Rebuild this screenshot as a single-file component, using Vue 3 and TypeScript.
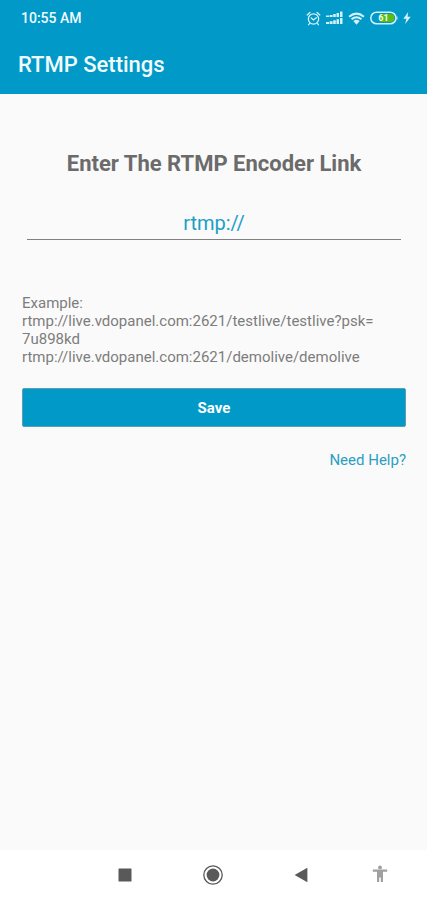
<script setup lang="ts">
import { ref } from 'vue'

const link = ref('rtmp://')
const saved = ref('')

function save(): void {
  saved.value = link.value.trim()
}
</script>

<template>
  <div class="screen">
    <header class="top">
      <div class="status">
        <span class="clock">10:55 AM</span>
        <div class="indicators">
          <svg class="alarm" viewBox="0 0 16 16" aria-label="Alarm">
            <g fill="none" stroke="currentColor" stroke-width="1.4" stroke-linecap="round">
              <circle cx="8" cy="8.5" r="5.5" />
              <path d="M1.2 4.2 4.2 1.6M14.8 4.2 11.8 1.6M3.8 13.4 2.8 14.6M12.2 13.4l1 1.2M5.6 7.4 8 9.6l3-2.4" />
            </g>
          </svg>
          <svg class="signal" viewBox="0 0 17 14" aria-label="Signal">
            <g fill="currentColor">
              <path d="M0 4.5h3V6H0zM3.6 4h3v2h-3zM7.2 3h2.6v3H7.2zM10.5 2H13v4h-2.5zM14 0.5h2.5V6H14z" />
              <path d="M0 11h3v2H0zM3.6 10.2h3V13h-3zM7.2 9.2h2.6V13H7.2zM10.5 8.2H13V13h-2.5zM14 7h2.5v6H14z" />
            </g>
          </svg>
          <svg class="wifi" viewBox="0 0 18 14" aria-label="Wi-Fi">
            <g fill="none" stroke="currentColor" stroke-width="2.2">
              <path d="M1 5.2Q9-1.6 17 5.2" />
              <path d="M3.7 7.9Q9 3.3 14.3 7.9" />
            </g>
            <path fill="currentColor" d="M5.6 9.7Q9 6.9 12.4 9.7L9 13.7z" />
          </svg>
          <svg class="battery" viewBox="0 0 28 14" aria-label="Battery charging">
            <rect x="0.8" y="1.2" width="25.2" height="11.6" rx="5.8" fill="none" stroke="currentColor" stroke-width="1.5" />
            <path fill="currentColor" d="M26.6 4.6q2 2.4 0 4.8z" />
            <path fill="#58bd16" d="M10 3h10.4a4 4 0 0 1 0 8H10z" />
            <text x="13.4" y="10.4" text-anchor="middle" class="level">61</text>
          </svg>
          <svg class="bolt" viewBox="0 0 8 12" aria-hidden="true">
            <path fill="currentColor" d="M5.2 0 .3 6.8h3L2.2 12 7.7 4.8H4.6z" />
          </svg>
        </div>
      </div>
      <h1 class="title">RTMP Settings</h1>
    </header>

    <main class="content">
      <form class="form" @submit.prevent="save">
        <label class="heading" for="link">Enter The RTMP Encoder Link</label>
        <input id="link" v-model="link" class="field" type="text" autocomplete="off" spellcheck="false" />
        <p class="example">
          Example:<br />rtmp://live.vdopanel.com:2621/testlive/testlive?psk=<wbr />7u898kd<br />rtmp://live.vdopanel.com:2621/demolive/demolive
        </p>
        <button class="save" type="submit">Save</button>
        <a class="help" href="#help">Need Help?</a>
      </form>
    </main>

    <nav class="navbar" aria-label="System">
      <button class="key recents" type="button" aria-label="Recent apps">
        <svg viewBox="0 0 20 20"><rect x="3.5" y="3.5" width="13" height="13" rx="0.5" fill="#595959" /></svg>
      </button>
      <button class="key" type="button" aria-label="Home">
        <svg viewBox="0 0 20 20">
          <circle cx="10" cy="10" r="9.2" fill="none" stroke="#595959" stroke-width="1.3" />
          <circle cx="10" cy="10" r="6.4" fill="#595959" />
        </svg>
      </button>
      <button class="key" type="button" aria-label="Back">
        <svg viewBox="0 0 20 20"><path d="M3.6 10 16.4 2.8v14.4z" fill="#595959" /></svg>
      </button>
      <button class="key" type="button" aria-label="Accessibility">
        <svg viewBox="0 0 20 20">
          <g fill="#a0a0a0">
            <circle cx="10" cy="2.4" r="1.9" />
            <path d="M2.8 4.6h14.4v2.2H13V17h-2.2v-4.6H9.2V17H7V6.8H2.8z" />
          </g>
        </svg>
      </button>
    </nav>
  </div>
</template>

<style>
body {
  background: #fafafa;
}
</style>

<style scoped>
.screen {
  display: flex;
  flex-direction: column;
  min-height: 100vh;
  background: #fafafa;
  font-family: Roboto, "Liberation Sans", sans-serif;
}

.top {
  background: #0099c8;
  color: #f2fbfd;
}

.status {
  display: flex;
  align-items: center;
  justify-content: space-between;
  height: 36px;
  padding: 0 16px 0 21px;
}

.clock {
  font-size: 14px;
  font-weight: 500;
}

.indicators {
  display: flex;
  align-items: center;
  gap: 5px;
  color: #d5f1f8;
}

.alarm {
  width: 15px;
  height: 15px;
}

.signal {
  width: 17px;
  height: 14px;
}

.wifi {
  width: 17px;
  height: 13px;
}

.battery {
  width: 28px;
  height: 14px;
}

.bolt {
  width: 8px;
  height: 12px;
}

.level {
  fill: #f2fbfd;
  font-size: 9px;
  font-weight: 700;
}

.title {
  margin: 0;
  padding: 0 18px;
  font-size: 22px;
  font-weight: 500;
  line-height: 58px;
}

.content {
  flex: 1;
  padding: 56px 21px 24px 22px;
}

.form {
  display: flex;
  flex-direction: column;
}

.heading {
  color: #6b6b6b;
  font-size: 22px;
  font-weight: 700;
  line-height: 28px;
  text-align: center;
}

.field {
  height: 32px;
  margin: 29px 5px 0;
  padding: 0;
  border: 0;
  border-bottom: 1px solid #808080;
  border-radius: 0;
  outline: 0;
  background: transparent;
  color: #1a9fc6;
  font: inherit;
  font-size: 20px;
  text-align: center;
}

.example {
  margin: 54px 0 22px;
  color: #7d7d7d;
  font-size: 15px;
  line-height: 18px;
}

.save {
  height: 39px;
  padding: 0;
  border: 1px solid #5d9db3;
  border-radius: 2px;
  background: #0099c8;
  color: #fff;
  font: inherit;
  font-size: 15px;
  font-weight: 700;
}

.help {
  align-self: flex-end;
  margin-top: 24px;
  color: #2a9fc2;
  font-size: 15px;
  line-height: 18px;
  text-decoration: none;
}

.navbar {
  display: grid;
  grid-template-columns: 81fr 88fr 88fr 88fr 70fr 12fr;
  height: 50px;
  background: #fff;
}

.key {
  display: flex;
  align-items: center;
  justify-content: center;
  padding: 0;
  border: 0;
  background: transparent;
}

.recents {
  grid-column-start: 2;
}

.key svg {
  width: 20px;
  height: 20px;
}
</style>
